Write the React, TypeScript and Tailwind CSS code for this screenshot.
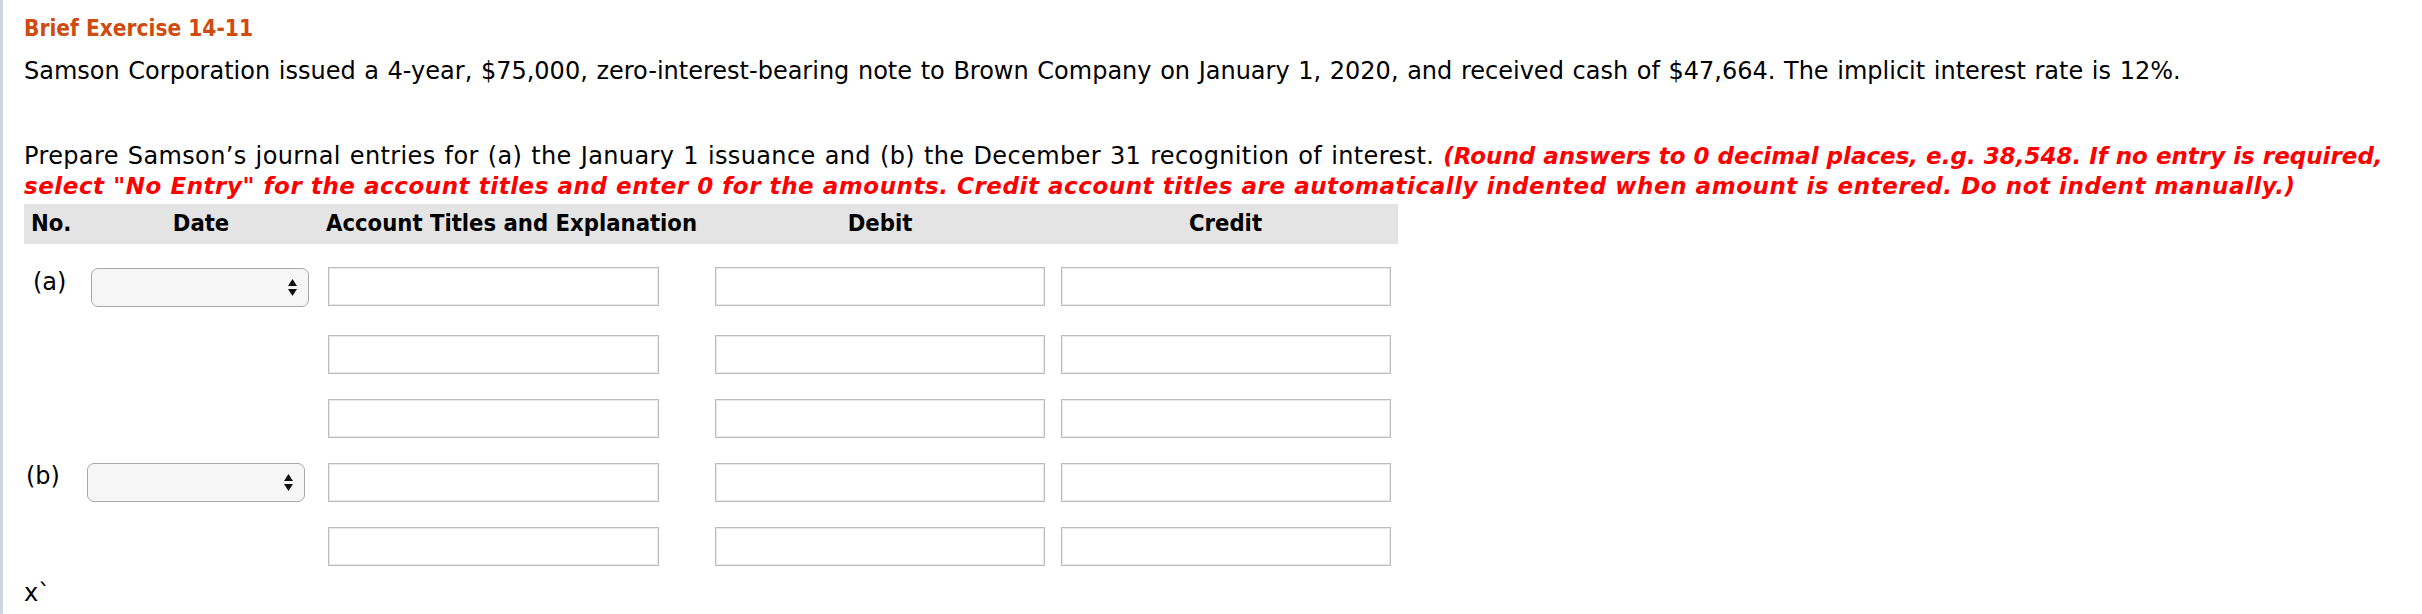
import React from "react";

const cols = "grid grid-cols-[60px_234px_389px_346px_345px]";

function Select({ shift }: { shift: string }) {
  return (
    <div
      className={`${shift} w-[218px] h-[39px] rounded-[7px] border-[1.5px] border-[#a8a8a8] bg-[#f6f6f6] flex items-center justify-end pr-[11px]`}
    >
      <svg width="9" height="17" viewBox="0 0 9 17">
        <path d="M4.5 0 L9 7 L0 7 Z" fill="#111" />
        <path d="M0 10 L9 10 L4.5 17 Z" fill="#111" />
      </svg>
    </div>
  );
}

function Box({ w, ml }: { w: string; ml: string }) {
  return (
    <div
      className={`${w} ${ml} h-[39px] border border-[#bdbdbd] bg-white shadow-[inset_0_0_0_1px_#e9e9e9]`}
    />
  );
}

function Row({
  mt,
  label,
  labelCls,
  select,
}: {
  mt: string;
  label?: string;
  labelCls?: string;
  select?: React.ReactNode;
}) {
  return (
    <div className={`${cols} ${mt} h-[39px] items-start`}>
      <div className={`text-[24px] leading-[30px] text-black ${labelCls ?? ""}`}>
        {label ?? ""}
      </div>
      <div>{select}</div>
      <div>
        <Box w="w-[331px]" ml="ml-[10px]" />
      </div>
      <div>
        <Box w="w-[330px]" ml="ml-[8px]" />
      </div>
      <div>
        <Box w="w-[330px]" ml="ml-[8px]" />
      </div>
    </div>
  );
}

export default function App() {
  return (
    <div className="min-h-[614px] w-full bg-white border-l-[3px] border-[#cdd5e3] pl-[21px] font-['DejaVu_Sans',sans-serif] text-black">
      <div className="pt-[13px]">
        <h1 className="text-[22.5px] leading-[30px] font-bold text-[#cf4b0e] font-['DejaVu_Sans_Condensed','DejaVu_Sans',sans-serif]">
          Brief Exercise 14-11
        </h1>
        <p className="mt-[13px] text-[24px] leading-[30px] whitespace-nowrap [word-spacing:1px]">
          Samson Corporation issued a 4-year, $75,000, zero-interest-bearing note to Brown
          Company on January 1, 2020, and received cash of $47,664. The implicit interest
          rate is 12%.
        </p>
        <p className="mt-[55px] text-[24px] leading-[30px] whitespace-nowrap [word-spacing:1px]">
          <span className="tracking-[0.37px]">
            Prepare Samson’s journal entries for (a) the January 1 issuance and (b) the
            December 31 recognition of interest.{" "}
          </span>
          <span className="text-[#ff0000] font-bold italic text-[23px] [word-spacing:0px]">
            (Round answers to 0 decimal places, e.g. 38,548. If no entry is required,
            <br />
            <span className="tracking-[0.54px]">
              select "No Entry" for the account titles and enter 0 for the amounts. Credit
              account titles are automatically indented when amount is entered. Do not
              indent manually.)
            </span>
          </span>
        </p>

        <div className="mt-[3px] w-[1374px]">
          <div className={`${cols} h-[40px] bg-[#e4e4e4] items-center text-[23.6px] font-bold text-black font-['DejaVu_Sans_Condensed','DejaVu_Sans',sans-serif]`}>
            <div className="pl-[7px]">No.</div>
            <div className="text-center">Date</div>
            <div className="pl-[8px]">Account Titles and Explanation</div>
            <div className="text-center">Debit</div>
            <div className="text-center">Credit</div>
          </div>

          <Row
            mt="mt-[23px]"
            label="(a)"
            labelCls="pl-[9px]"
            select={<Select shift="ml-[7px] mt-[1px]" />}
          />
          <Row mt="mt-[29px]" />
          <Row mt="mt-[25px]" />
          <Row
            mt="mt-[25px]"
            label="(b)"
            labelCls="pl-[2px] -mt-[2px]"
            select={<Select shift="ml-[3px]" />}
          />
          <Row mt="mt-[25px]" />
        </div>

        <div className="mt-[12px] text-[24px] leading-[30px]">x`</div>
      </div>
    </div>
  );
}
